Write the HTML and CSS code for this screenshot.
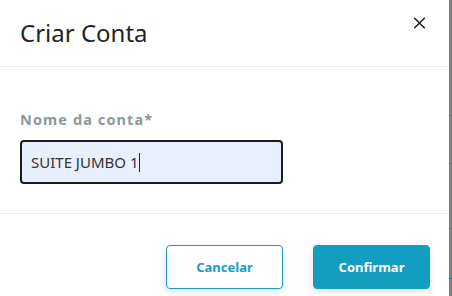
FILE: index.html
```html
<!DOCTYPE html>
<html lang="pt">
<head>
<meta charset="utf-8">
<link rel="stylesheet" href="styles.css">
</head>
<body>
<div class="page">
  <div class="modal">
    <div class="modal-header">
      <h2 class="modal-title">Criar Conta</h2>
      <button class="close" type="button" aria-label="Fechar">
        <svg width="13" height="12" viewBox="0 0 13 12"><path d="M1.2 0.8L11.8 11.2M11.8 0.8L1.2 11.2" stroke="#222" stroke-width="1.6" fill="none"/></svg>
      </button>
    </div>
    <div class="modal-body">
      <label class="field-label" for="nome">Nome da conta*</label>
      <div class="input"><span class="input-text">SUITE JUMBO 1</span><span class="caret"></span></div>
    </div>
    <div class="modal-footer">
      <button class="btn btn-outline" type="button">Cancelar</button>
      <button class="btn btn-primary" type="button">Confirmar</button>
    </div>
  </div>
  <div class="backdrop">
    <div class="bd-line l1"></div>
    <div class="bd-line l2"></div>
    <div class="bd-line l3"></div>
    <div class="bd-line l4"></div>
  </div>
</div>
</body>
</html>
```

FILE: styles.css
```css
html, body {
  margin: 0;
  padding: 0;
  height: 100%;
  background: #7f7f7f;
}
body {
  font-family: "Noto Sans", "Open Sans", sans-serif;
  color: #212529;
}
.page {
  display: flex;
  height: 296px;
  overflow: hidden;
}
.modal {
  width: 449px;
  flex: none;
  background: #fff;
  display: flex;
  flex-direction: column;
}
.backdrop {
  flex: 1;
  display: flex;
  flex-direction: column;
  background: #7f7f7f;
}
.bd-line {
  height: 1px;
  background: #6c6c6c;
}
.l1 { margin-top: 115px; }
.l2 { margin-top: 47px; }
.l3 { margin-top: 64px; }
.l4 { margin-top: 49px; background: #2f6f86; }

.modal-header {
  height: 67px;
  box-sizing: border-box;
  border-bottom: 1px solid #e9ecef;
  display: flex;
  align-items: flex-start;
  justify-content: space-between;
  padding: 0 20px;
}
.modal-title {
  margin: 19px 0 0;
  font-size: 24px;
  font-weight: 400;
  line-height: 28px;
  color: #212529;
}
.close {
  border: 0;
  background: none;
  padding: 0;
  margin: 16px 3px 0 0;
  width: 14px;
  height: 14px;
  display: flex;
  align-items: center;
  justify-content: center;
}
.modal-body {
  height: 147px;
  box-sizing: border-box;
  border-bottom: 1px solid #e9ecef;
  padding: 43px 20px 0;
  display: flex;
  flex-direction: column;
}
.field-label {
  font-size: 14.5px;
  font-weight: 700;
  letter-spacing: 1.1px;
  color: #8e979b;
  line-height: 18px;
}
.input {
  margin-top: 12px;
  width: 263px;
  height: 44px;
  box-sizing: border-box;
  border: 2px solid #1b1b1b;
  border-radius: 4px;
  background: #e8f0fe;
  display: flex;
  align-items: center;
  padding: 0 9px;
  font-size: 15px;
  color: #333;
}
.caret {
  width: 1px;
  height: 19px;
  background: #222;
  margin-left: 1px;
}
.modal-footer {
  flex: 1;
  display: flex;
  justify-content: flex-end;
  align-items: flex-start;
  gap: 30px;
  padding: 31px 19px 0 0;
}
.btn {
  width: 117px;
  height: 44px;
  box-sizing: border-box;
  border-radius: 4px;
  font-family: inherit;
  font-size: 13px;
  font-weight: 700;
  cursor: pointer;
  box-shadow: 0 3px 6px rgba(0,0,0,0.12);
}
.btn-outline {
  background: #fff;
  border: 1px solid #1a9cc2;
  color: #1a9cc2;
}
.btn-primary {
  background: #129dc1;
  border: 1px solid #129dc1;
  color: #fff;
}
```
